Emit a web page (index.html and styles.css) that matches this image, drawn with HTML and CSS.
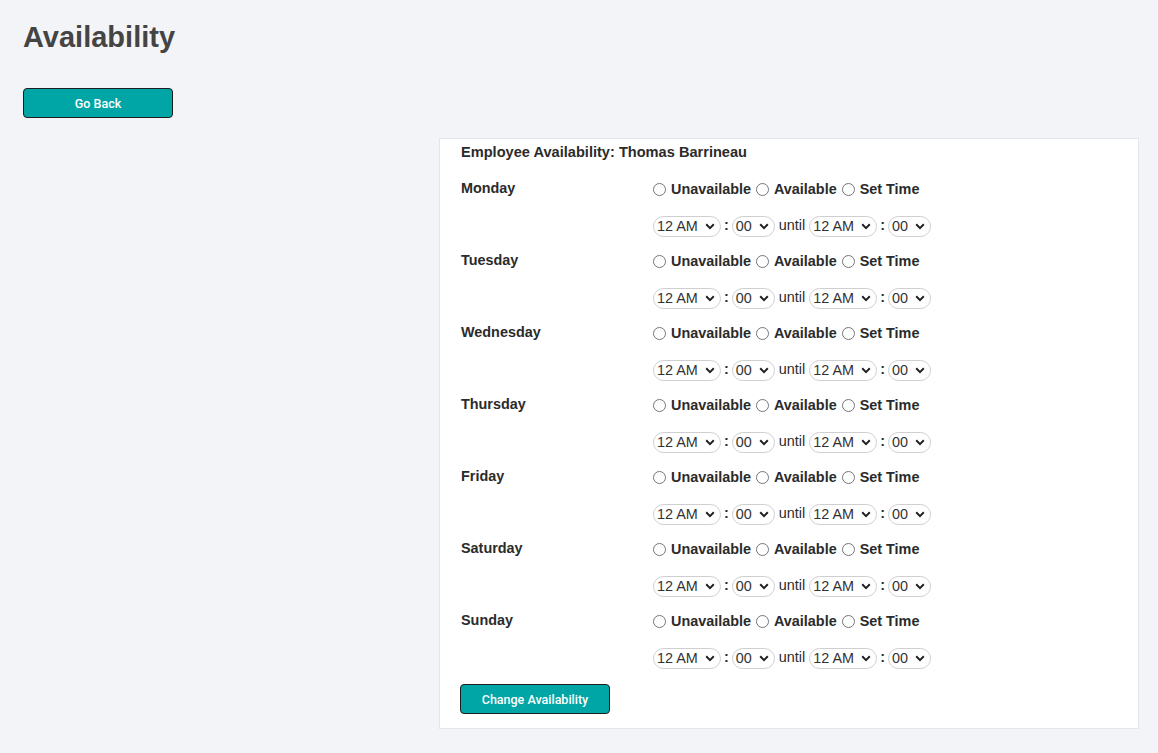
FILE: index.html
```html
<!DOCTYPE html>
<html lang="en">
<head>
    <meta charset="UTF-8">
    <meta name="viewport" content="width=device-width, initial-scale=1.0">
    <title>Availability</title>
    <link rel="stylesheet" href="styles.css">
</head>
<body>
    <div class="page">
        <h1>Availability</h1>
        <button class="btn back-btn">Go Back</button>

        <div class="card-wrap">
            <form class="card" id="availabilityForm">
                <h3>Employee Availability: Thomas Barrineau</h3>
                <div id="days"></div>
                <button type="button" class="btn submit-btn">Change Availability</button>
            </form>
        </div>
    </div>

    <script>
        const days = ['Monday', 'Tuesday', 'Wednesday', 'Thursday', 'Friday', 'Saturday', 'Sunday'];

        function hourOptions() {
            let html = '';
            for (let i = 0; i < 24; i++) {
                let h = i % 12 === 0 ? 12 : i % 12;
                html += `<option>${h} ${i < 12 ? 'AM' : 'PM'}</option>`;
            }
            return html;
        }

        function minuteOptions() {
            return ['00', '15', '30', '45'].map(m => `<option>${m}</option>`).join('');
        }

        const container = document.getElementById('days');
        days.forEach(function (day) {
            const key = day.toLowerCase();
            container.innerHTML += `
                <div class="day">
                    <div class="day-name">${day}</div>
                    <div class="day-controls">
                        <div class="choices">
                            <label><input type="radio" name="${key}" value="unavailable">Unavailable</label>
                            <label><input type="radio" name="${key}" value="available">Available</label>
                            <label><input type="radio" name="${key}" value="set">Set Time</label>
                        </div>
                        <div class="times">
                            <select class="hour">${hourOptions()}</select> <b>:</b> <select class="minute">${minuteOptions()}</select> until <select class="hour">${hourOptions()}</select> <b>:</b> <select class="minute">${minuteOptions()}</select>
                        </div>
                    </div>
                </div>`;
        });
    </script>
</body>
</html>
```

FILE: styles.css
```css
body {
    margin: 0;
    font-family: "Liberation Sans", Arial, sans-serif;
    background-color: #f3f4f8;
    color: #2b2b2b;
}
.page {
    padding: 21px 19px 24px 23px;
}
h1 {
    margin: 0 0 34px 0;
    font-size: 29px;
    color: #444;
}
.btn {
    display: block;
    width: 150px;
    height: 30px;
    padding: 0;
    background-color: #00a5a5;
    color: white;
    border: 1px solid #1e1e1e;
    border-radius: 4px;
    font-family: Roboto, "Liberation Sans", Arial, sans-serif;
    font-size: 12.5px;
    font-weight: 500;
    cursor: pointer;
}
.btn:hover {
    background-color: #008c8c;
}
.card-wrap {
    display: flex;
    justify-content: flex-end;
    margin-top: 20px;
}
.card {
    width: 700px;
    box-sizing: border-box;
    background-color: white;
    border: 1px solid #e3e6ed;
    padding: 4px 21px 14px 21px;
}
.card h3 {
    margin: 0 0 17px 0;
    font-size: 14.6px;
    line-height: 18px;
}
.day {
    display: grid;
    grid-template-columns: 191px auto;
    margin-bottom: 14px;
}
.day-name {
    font-size: 14.4px;
    font-weight: bold;
    line-height: 20px;
}
.choices {
    display: flex;
    align-items: center;
    gap: 5px;
    height: 22px;
    margin-bottom: 14px;
    padding-left: 1px;
    font-size: 14.4px;
    font-weight: bold;
}
.choices label {
    display: inline-flex;
    align-items: center;
}
.choices input {
    width: 13px;
    height: 13px;
    margin: 0 5px 0 0;
}
.times {
    height: 22px;
    line-height: 22px;
    padding-left: 1px;
    font-size: 14.4px;
    white-space: nowrap;
}
.times b {
    margin: 0 -1px;
}
.times select {
    appearance: none;
    -webkit-appearance: none;
    height: 21px;
    padding: 0 21px 0 3px;
    border: 1px solid #cfcfcf;
    border-radius: 11px;
    background: white url("data:image/svg+xml;utf8,<svg xmlns='http://www.w3.org/2000/svg' width='10' height='7' viewBox='0 0 10 7'><path d='M1.2 1.3 L5 5.1 L8.8 1.3' fill='none' stroke='%23222' stroke-width='2'/></svg>") no-repeat right 5px center;
    color: #333;
    font-family: "Liberation Sans", Arial, sans-serif;
    font-size: 14.4px;
    vertical-align: middle;
}
.submit-btn {
    margin-top: 16px;
    margin-left: -1px;
}
```
